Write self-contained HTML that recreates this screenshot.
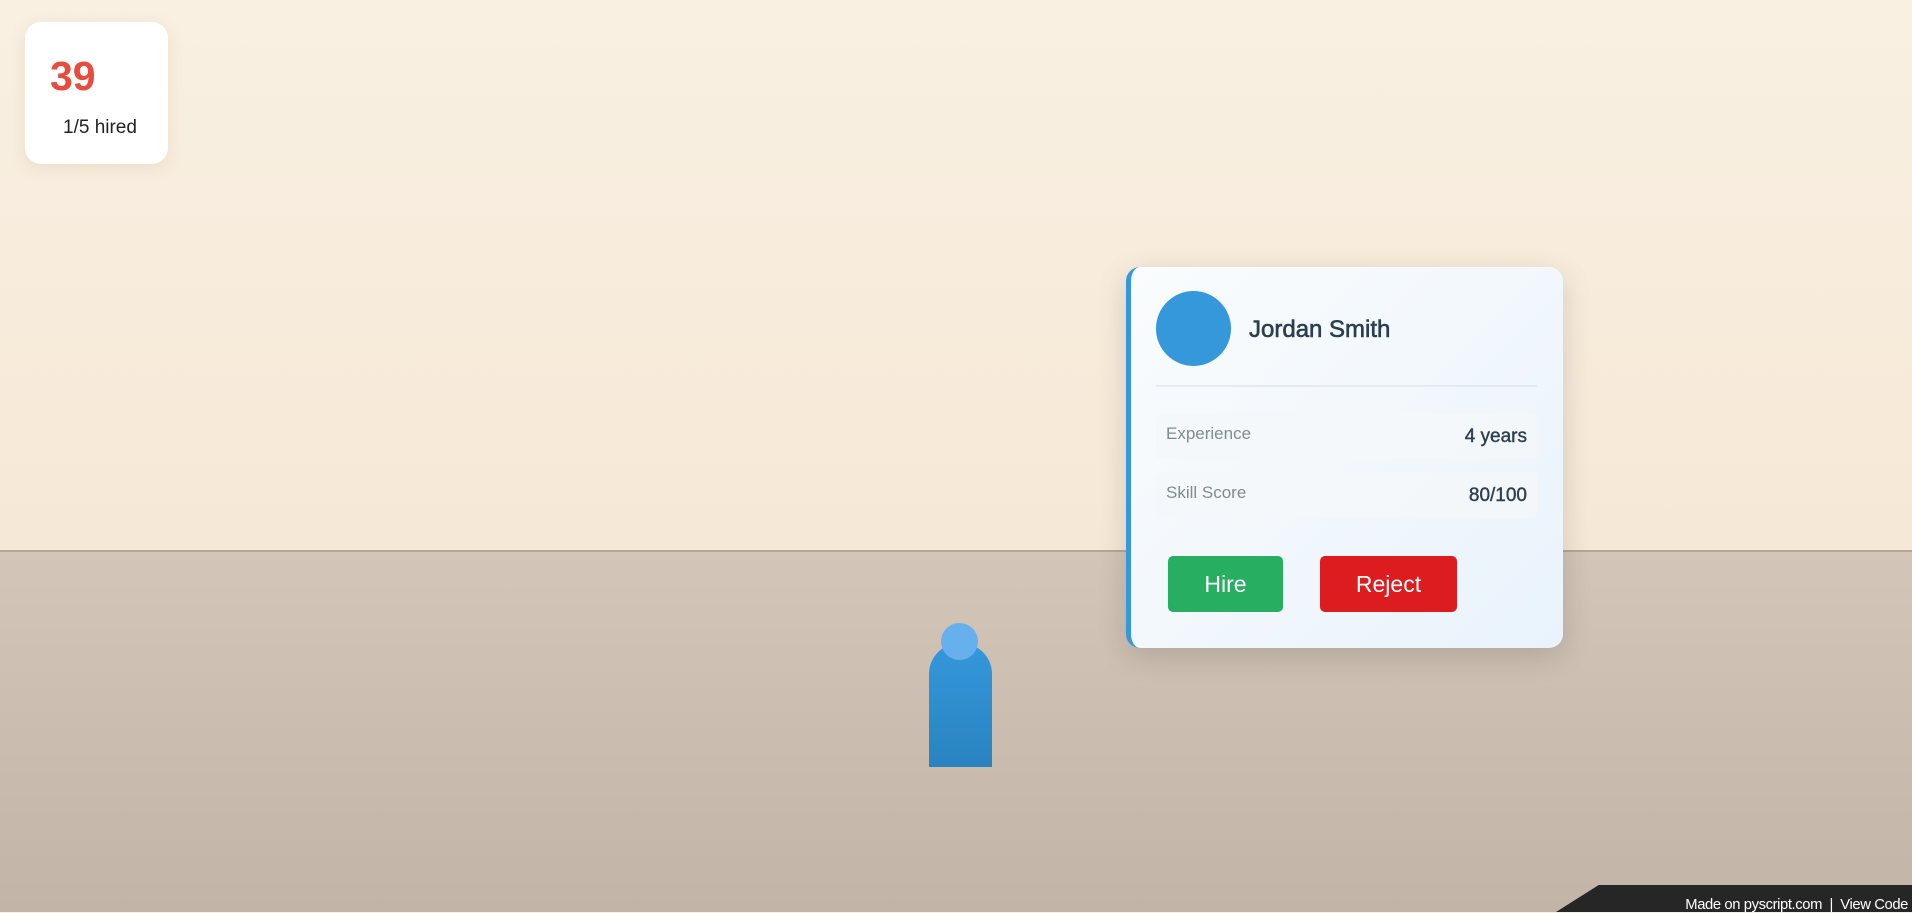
<!DOCTYPE html>
<html><head><style>
*{margin:0;padding:0;box-sizing:border-box}
body{width:1912px;height:912px;overflow:hidden;position:relative;font-family:"Liberation Sans","DejaVu Sans",sans-serif;background:linear-gradient(#f9f0e2,#f6e8d6 550px)}
.floor{position:absolute;left:0;top:550px;width:1912px;height:362px;background:linear-gradient(#d3c5b8,#c2b4a7);border-top:2px solid #b8a692}
.score{position:absolute;left:25px;top:22px;width:143px;height:142px;background:#fff;border-radius:16px;box-shadow:0 4px 16px rgba(160,130,90,.15)}
.score .n{position:absolute;left:25px;top:34px;font-size:41px;font-weight:bold;color:#e74c3c;line-height:1}
.score .h{position:absolute;left:38px;top:95px;font-size:19px;color:#222}
.body{position:absolute;left:929px;top:643px;width:63px;height:124px;border-radius:31px 31px 0 0;background:linear-gradient(#3498db,#2a83c0)}
.head{position:absolute;left:941px;top:623px;width:37px;height:37px;border-radius:50%;background:#66b0ee}
.card{position:absolute;left:1126px;top:267px;width:437px;height:381px;border-radius:14px;background:linear-gradient(135deg,#fafcfd,#e9f3fc);border-left:5px solid #3498db;box-shadow:0 8px 30px rgba(0,0,0,.15)}
.av{position:absolute;left:25px;top:24px;width:75px;height:75px;border-radius:50%;background:#3498db}
.name{position:absolute;left:118px;top:49px;font-size:24px;color:#2c3e50;-webkit-text-stroke:.6px #2c3e50}
.div{position:absolute;left:25px;top:118px;width:381px;height:2px;background:#e5ecf1}
.row{position:absolute;left:25px;width:381px;height:46px;background:rgba(245,247,249,.8);border-radius:6px}
.row .l{position:absolute;left:10px;top:11px;font-size:17px;color:#7f8c8d}
.row .r{position:absolute;right:10px;top:13px;font-size:19px;color:#2c3e50;-webkit-text-stroke:.4px #2c3e50}
.btn{position:absolute;top:289px;height:56px;border-radius:5px;color:#fff;font-size:23px;text-align:center;line-height:56px}
.foot{position:absolute;left:1556px;top:885px;width:356px;height:27px;background:#262626;clip-path:polygon(0 100%,12% 0,100% 0,100% 100%)}
.ft{position:absolute;right:4px;top:897px;font-size:14.8px;color:#fff;letter-spacing:-.4px;white-space:nowrap}
</style></head><body>
<div class="floor"></div>
<div class="score"><div class="n">39</div><div class="h">1/5 hired</div></div>
<div class="body"></div><div class="head"></div>
<div class="card">
<div class="av"></div>
<div class="name">Jordan Smith</div>
<div class="div"></div>
<div class="row" style="top:146px"><span class="l">Experience</span><span class="r">4 years</span></div>
<div class="row" style="top:205px"><span class="l">Skill Score</span><span class="r">80/100</span></div>
<div class="btn" style="left:37px;width:115px;background:#27ae60">Hire</div>
<div class="btn" style="left:189px;width:137px;background:#dc1c1f">Reject</div>
</div>
<div class="foot"></div>
<div class="ft">Made on pyscript.com &nbsp;|&nbsp; View Code</div>
</body></html>
